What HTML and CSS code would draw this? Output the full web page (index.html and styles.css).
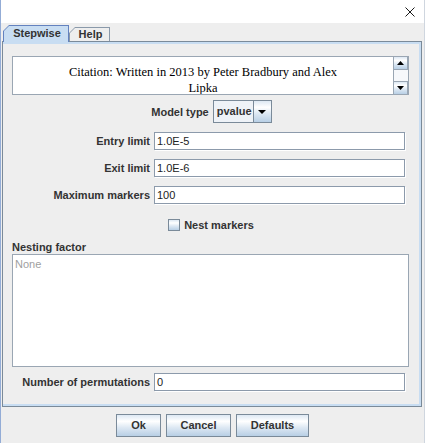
FILE: index.html
```html
<!DOCTYPE html>
<html>
<head>
<meta charset="utf-8">
<title>Stepwise</title>
<link rel="stylesheet" href="styles.css">
</head>
<body>
<div class="window">
  <div class="titlebar">
    <svg class="close" width="10" height="10" viewBox="0 0 10 10"><path d="M0.5 0.5 L9.5 9.5 M9.5 0.5 L0.5 9.5" stroke="#1a1a1a" stroke-width="1" fill="none"/></svg>
  </div>
  <div class="tabbar">
    <div class="tab sel"><div class="tab-in">Stepwise</div></div>
    <div class="tab"><div class="tab-in">Help</div></div>
  </div>
  <div class="panel">
    <div class="citation">
      <div class="cit-text">Citation: Written in 2013 by Peter Bradbury and Alex<br>Lipka</div>
      <div class="vscroll">
        <div class="sbtn"><svg width="7" height="4" viewBox="0 0 7 4"><path d="M3.5 0 L7 4 L0 4 Z" fill="#000"/></svg></div>
        <div class="thumb"></div>
        <div class="sbtn"><svg width="7" height="4" viewBox="0 0 7 4"><path d="M0 0 L7 0 L3.5 4 Z" fill="#000"/></svg></div>
      </div>
    </div>
    <div class="model-row">
      <span class="lbl">Model type</span>
      <div class="combo">
        <span class="combo-val">pvalue</span>
        <span class="combo-btn"><svg width="8" height="4" viewBox="0 0 8 4"><path d="M0 0 L8 0 L4 4 Z" fill="#000"/></svg></span>
      </div>
    </div>
    <div class="frow first"><span class="lbl">Entry limit</span><div class="field">1.0E-5</div></div>
    <div class="frow"><span class="lbl">Exit limit</span><div class="field">1.0E-6</div></div>
    <div class="frow"><span class="lbl">Maximum markers</span><div class="field">100</div></div>
    <div class="check-row"><span class="cbox"></span><span class="lbl">Nest markers</span></div>
    <div class="nest-lbl lbl">Nesting factor</div>
    <div class="textarea"><span class="hint">None</span></div>
    <div class="frow perm"><span class="lbl">Number of permutations</span><div class="field">0</div></div>
  </div>
  <div class="buttons">
    <div class="btn ok">Ok</div>
    <div class="btn cancel">Cancel</div>
    <div class="btn defaults">Defaults</div>
  </div>
</div>
</body>
</html>
```
FILE: styles.css
```css
html, body {
  margin: 0;
  padding: 0;
  background: #eeeeee;
}
.window {
  width: 425px;
  height: 443px;
  box-sizing: border-box;
  border-left: 1px solid #93acd6;
  border-right: 1px solid #cfd6df;
  background: #eeeeee;
  overflow: hidden;
  font-family: "Liberation Sans", Arial, sans-serif;
  font-size: 11px;
  color: #333333;
}
.titlebar {
  height: 23px;
  background: #ffffff;
  display: flex;
  justify-content: flex-end;
  align-items: center;
  padding-right: 9px;
}
.close { display: block; }

.tabbar {
  height: 18px;
  display: flex;
  align-items: flex-end;
  padding-left: 2px;
}
.tab {
  height: 14px;
  box-sizing: border-box;
  padding: 1px 1px 0 1px;
  background: #8a99aa;
  clip-path: polygon(6px 0, 100% 0, 100% 100%, 0 100%, 0 6px);
  width: 41px;
}
.tab.sel {
  width: 66px;
  height: 17px;
  margin-bottom: -1px;
  background: #6382bf;
  position: relative;
  z-index: 1;
}
.tab-in {
  height: 100%;
  background: #eeeeee;
  clip-path: polygon(5px 0, 100% 0, 100% 100%, 0 100%, 0 5px);
  font-weight: bold;
  text-align: center;
  line-height: 13px;
  padding-left: 2px;
  box-sizing: border-box;
}
.tab.sel .tab-in {
  background: #c8ddf2;
  line-height: 15px;
}

.panel {
  margin-left: 1px;
  width: 420px;
  height: 366px;
  box-sizing: border-box;
  border: 1px solid #7a8a99;
  box-shadow: inset 0 2px 0 #c8ddf2, inset -2px 0 0 #c8ddf2, inset 0 -2px 0 #c8ddf2;
  padding: 14px 12px 0 9px;
  display: flex;
  flex-direction: column;
}
.lbl {
  font-weight: bold;
  white-space: nowrap;
}

.citation {
  height: 39px;
  box-sizing: border-box;
  border: 1px solid #9aa6b3;
  background: #ffffff;
  display: flex;
}
.cit-text {
  flex: 1;
  text-align: center;
  font-family: "Liberation Serif", "Times New Roman", serif;
  font-size: 12.5px;
  line-height: 16px;
  color: #000000;
  padding-top: 7px;
  overflow: hidden;
}
.vscroll {
  width: 14px;
  display: flex;
  flex-direction: column;
  border-left: 1px solid #9aa6b3;
  background: #eeeeee;
}
.sbtn {
  height: 13px;
  box-sizing: border-box;
  border: 1px solid #9aa6b3;
  border-left: none;
  background: linear-gradient(#dde8f3 0%, #ffffff 30%, #dde8f3 60%, #b8cfe5 100%);
  display: flex;
  align-items: center;
  justify-content: center;
}
.sbtn:first-child { border-top: none; }
.sbtn:last-child { border-bottom: none; }
.thumb {
  flex: 1;
  background: #f6f8fb;
}

.model-row {
  margin-top: 5px;
  height: 23px;
  display: flex;
  justify-content: center;
  align-items: center;
  gap: 4px;
  padding-left: 2px;
}
.combo {
  width: 59px;
  height: 23px;
  box-sizing: border-box;
  border: 1px solid #7a8a99;
  display: flex;
  background: linear-gradient(#dde8f3 0%, #ffffff 30%, #dde8f3 60%, #b8cfe5 100%);
}
.combo-val {
  flex: 1;
  font-weight: bold;
  line-height: 21px;
  padding-left: 3px;
  background: #eef2f7;
}
.combo-btn {
  width: 17px;
  border-left: 1px solid #7a8a99;
  display: flex;
  align-items: center;
  justify-content: center;
}

.frow {
  margin-top: 9px;
  height: 18px;
  display: grid;
  grid-template-columns: 138px 251px;
  column-gap: 4px;
  align-items: center;
}
.frow .lbl { text-align: right; }
.field {
  height: 18px;
  box-sizing: border-box;
  border: 1px solid #8c9aab;
  box-shadow: inset 1px 1px 0 #ffffff, 1px 1px 0 #ffffff;
  background: #ffffff;
  padding-left: 2px;
  line-height: 16px;
  color: #222222;
}
.frow.perm { margin-top: 6px; }

.check-row {
  margin-top: 14px;
  height: 14px;
  display: flex;
  justify-content: center;
  align-items: center;
  gap: 4px;
  padding-left: 1px;
}
.cbox {
  width: 12px;
  height: 12px;
  box-sizing: border-box;
  border: 1px solid #7a8a99;
  background: linear-gradient(#dde8f3 0%, #ffffff 30%, #dde8f3 60%, #b8cfe5 100%);
}

.nest-lbl {
  margin-top: 9px;
  height: 13px;
  line-height: 13px;
}
.textarea {
  height: 113px;
  box-sizing: border-box;
  border: 1px solid #9aa6b3;
  background: #ffffff;
  padding: 2px 2px;
  line-height: 14px;
}
.hint { color: #a0a0a0; }

.buttons {
  margin-top: 7px;
  display: flex;
  justify-content: center;
  gap: 5px;
}
.btn {
  height: 23px;
  box-sizing: border-box;
  border: 1px solid #7a8a99;
  background: linear-gradient(#dde8f3 0%, #ffffff 30%, #dde8f3 60%, #b8cfe5 100%);
  font-weight: bold;
  text-align: center;
  line-height: 21px;
}
.btn.ok { width: 45px; }
.btn.cancel { width: 65px; }
.btn.defaults { width: 73px; }
```
